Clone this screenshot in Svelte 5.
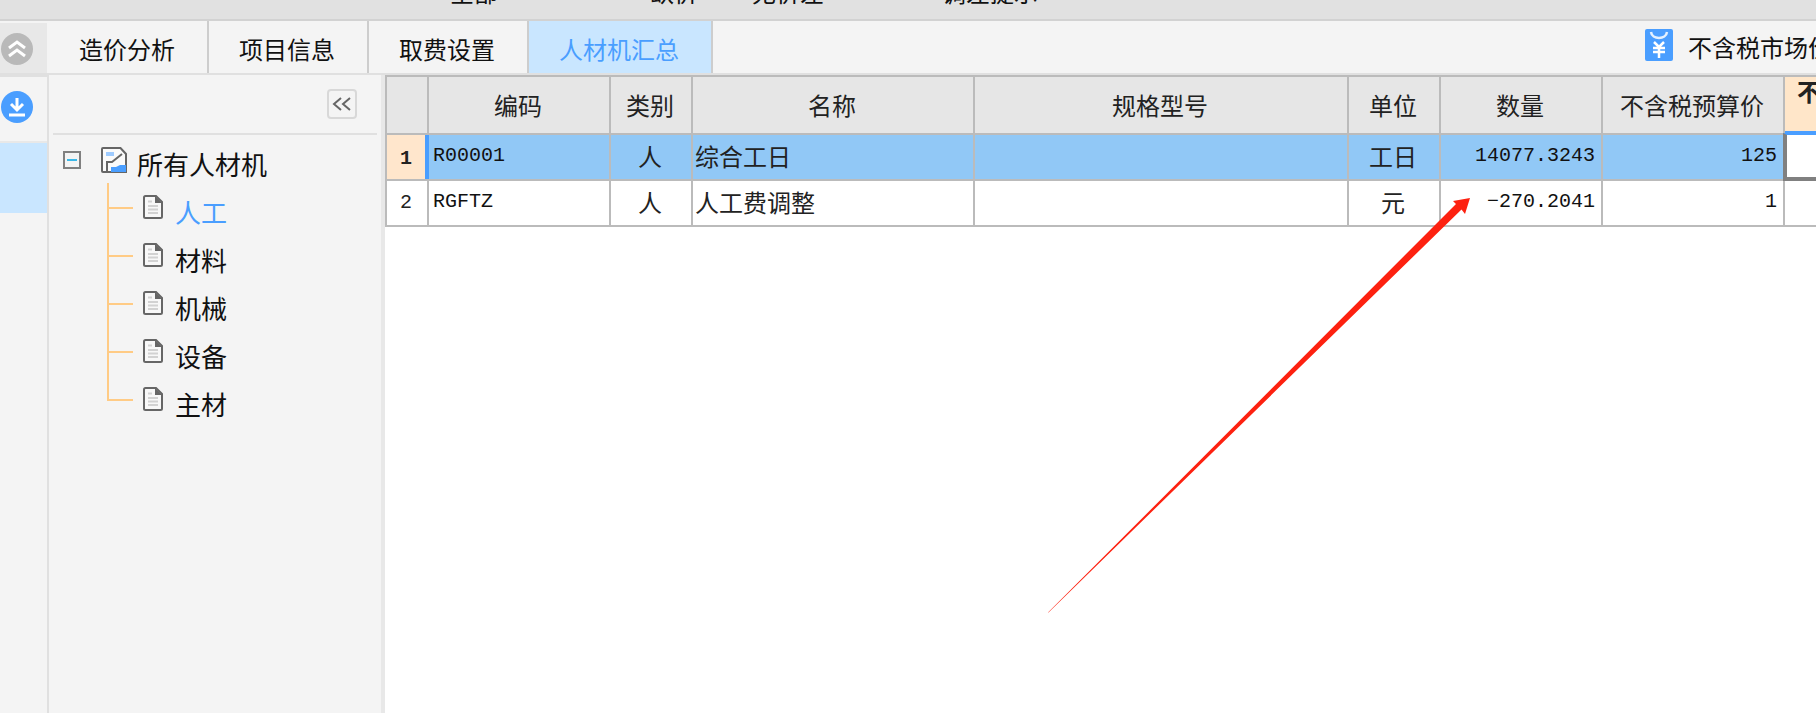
<script>
  const topItems = ['全部', '缺价', '无价差', '调差提示'];
  const tabs = ['造价分析', '项目信息', '取费设置', '人材机汇总'];
  const treeItems = ['人工', '材料', '机械', '设备', '主材'];
  const columns = ['', '编码', '类别', '名称', '规格型号', '单位', '数量', '不含税预算价'];
  const rows = [
    { no: '1', code: 'R00001', kind: '人', name: '综合工日', unit: '工日', qty: '14077.3243', price: '125' },
    { no: '2', code: 'RGFTZ', kind: '人', name: '人工费调整', unit: '元', qty: '−270.2041', price: '1' }
  ];
</script>

{#snippet docIcon()}
  <svg class="doc" viewBox="0 0 20 24" aria-hidden="true">
    <path d="M2.500 1h10.500l6 6v14.500a1.500 1.500 0 0 1-1.500 1.500h-15a1.500 1.500 0 0 1-1.500-1.500v-19a1.500 1.500 0 0 1 1.500-1.500z" fill="#f8f8f8" stroke="#666" stroke-width="2" />
    <path d="M12 1l7 7h-7z" fill="#666" />
    <path d="M5 6.500h4M5 11h10M5 14.500h10M5 18h10" stroke="#d2d2d2" stroke-width="2" />
  </svg>
{/snippet}

<div class="app">
  <div class="topbar">
    {#each topItems as item}
      <span>{item}</span>
    {/each}
  </div>

  <div class="tabs">
    <div class="collapse-cell">
      <svg class="circle" viewBox="0 0 32 32" aria-hidden="true">
        <circle cx="16" cy="16" r="16" fill="#b9b9b9" />
        <path d="M8 15l8-6 8 6M8 23l8-6 8 6" fill="none" stroke="#fff" stroke-width="3" />
      </svg>
    </div>
    {#each tabs as tab, i}
      <div class="tab" class:active={i === 3}>{tab}</div>
    {/each}
    <div class="price-switch">
      <svg class="yen" viewBox="0 0 28 32" aria-hidden="true">
        <rect width="28" height="32" rx="2" fill="#4a9eff" />
        <path d="M6 3c1 8 15 8 16 0" fill="none" stroke="#fff" stroke-width="2.500" opacity=".85" />
        <path d="M9 13l5 5 5-5M8 19h12M8 23h12M14 18v11" fill="none" stroke="#fff" stroke-width="2.500" />
      </svg>
      <span>不含税市场价</span>
    </div>
  </div>

  <div class="main">
    <aside class="rail">
      <svg class="circle" viewBox="0 0 32 32" aria-hidden="true">
        <circle cx="16" cy="16" r="16" fill="#4a9eff" />
        <path d="M16 7v11M10 13l6 6 6-6M8 24h16" fill="none" stroke="#fff" stroke-width="3" />
      </svg>
      <div class="rail-selected"></div>
    </aside>

    <nav class="tree">
      <div class="tree-tools">
        <div class="fold-btn">
          <svg viewBox="0 0 26 26" aria-hidden="true">
            <path d="M12 7l-7 6 7 6M21 7l-7 6 7 6" fill="none" stroke="#666" stroke-width="2" />
          </svg>
        </div>
      </div>
      <div class="root">
        <span class="minus"></span>
        <svg class="root-icon" viewBox="0 0 26 26" aria-hidden="true">
          <path d="M2 1h17.500l5.500 6v18h-23a1 1 0 0 1-1-1v-22a1 1 0 0 1 1-1z" fill="#fafafa" stroke="#666" stroke-width="2" />
          <path d="M5 5h8v4h-8z" fill="#9ecbff" />
          <path d="M6 25v-10h5l10-8" fill="none" stroke="#666" stroke-width="2" />
          <path d="M10 25v-5h5l4-2h6v7z" fill="#4a9eff" />
        </svg>
        <span class="root-label">所有人材机</span>
      </div>
      <ul>
        {#each treeItems as item, i}
          <li class:active={i === 0}>
            {@render docIcon()}
            <span>{item}</span>
          </li>
        {/each}
      </ul>
    </nav>

    <section class="sheet">
      <div class="grid">
        {#each columns as col}
          <div class="head">{col}</div>
        {/each}
        <div class="head head-cur">不含税市场价</div>

        {#each rows as row, i}
          <div class="no" class:on={i === 0}>{row.no}</div>
          <div class="cell mono code" class:sel={i === 0}>{row.code}</div>
          <div class="cell center" class:sel={i === 0}>{row.kind}</div>
          <div class="cell" class:sel={i === 0}>{row.name}</div>
          <div class="cell" class:sel={i === 0}></div>
          <div class="cell center" class:sel={i === 0}>{row.unit}</div>
          <div class="cell mono right" class:sel={i === 0}>{row.qty}</div>
          <div class="cell mono right" class:sel={i === 0}>{row.price}</div>
          <div class="cell" class:cur={i === 0}></div>
        {/each}
      </div>
    </section>
  </div>

  <svg class="arrow" viewBox="0 0 1816 713" aria-hidden="true">
    <path d="M1048 612.500L1456 204L1453 201L1470 198L1465 214L1461.500 209.500L1048.500 612.500z" fill="#fd2110" />
  </svg>
</div>

<style>
  :global(body) {
    background: #fff;
  }
  .app {
    position: relative;
    width: 1816px;
    height: 713px;
    overflow: hidden;
    display: flex;
    flex-direction: column;
    font-family: 'Noto Sans CJK SC', 'Liberation Sans', sans-serif;
    font-size: 24px;
    line-height: 24px;
    color: #111;
    background: #fff;
  }
  .topbar {
    box-sizing: border-box;
    flex: none;
    height: 21px;
    display: flex;
    padding-left: 450px;
    overflow: hidden;
    background: #e1e1e1;
    border-bottom: 2px solid #d2d2d2;
  }
  .topbar span {
    margin-top: -20px;
    height: 24px;
  }
  .topbar span:nth-child(2) {
    margin-left: 152px;
  }
  .topbar span:nth-child(3) {
    margin-left: 54px;
  }
  .topbar span:nth-child(4) {
    margin-left: 118px;
  }
  .tabs {
    box-sizing: border-box;
    flex: none;
    height: 54px;
    display: flex;
    background: #f4f4f4;
    border-bottom: 2px solid #e0e0e0;
  }
  .collapse-cell {
    box-sizing: border-box;
    width: 49px;
    padding: 10px 0 0 1px;
    margin-top: 2px;
    background: #e8e8e8;
    border-right: 2px solid #f4f4f4;
  }
  .circle {
    display: block;
    width: 32px;
    height: 32px;
  }
  .tab {
    box-sizing: border-box;
    width: 160px;
    padding: 16px 2px 0 0;
    text-align: center;
    border-right: 2px solid #cdcdcd;
  }
  .tab.active {
    width: 184px;
    color: #4a9eff;
    background: #c9e6ff;
  }
  .price-switch {
    margin-left: auto;
    width: 171px;
    display: flex;
    align-items: center;
    gap: 15px;
    overflow: hidden;
    white-space: nowrap;
  }
  .yen {
    flex: none;
    width: 28px;
    height: 32px;
    margin-top: -4px;
  }
  .main {
    flex: 1;
    min-height: 0;
    display: flex;
  }
  .rail {
    box-sizing: border-box;
    flex: none;
    width: 49px;
    padding: 14px 0 0 1px;
    background: #f4f4f4;
    border-top: 2px solid #e0e0e0;
    border-right: 2px solid #e0e0e0;
  }
  .rail-selected {
    height: 70px;
    margin: 18px 0 0 -1px;
    background: #c9e6ff;
    border-top: 2px solid #e8e8e8;
  }
  .tree {
    box-sizing: border-box;
    flex: none;
    width: 336px;
    background: #f4f4f4;
    border-right: 4px solid #e8e8e8;
  }
  .tree-tools {
    box-sizing: border-box;
    height: 60px;
    margin: 0 4px;
    padding: 14px 20px 0 0;
    display: flex;
    justify-content: flex-end;
    border-bottom: 2px solid #e0e0e0;
  }
  .fold-btn {
    box-sizing: border-box;
    width: 30px;
    height: 30px;
    border: 2px solid #d8d8d8;
    border-radius: 4px;
  }
  .fold-btn svg {
    display: block;
    width: 26px;
    height: 26px;
  }
  .root {
    box-sizing: border-box;
    height: 48px;
    padding: 12px 0 0 14px;
    display: flex;
    align-items: flex-start;
  }
  .minus {
    box-sizing: border-box;
    flex: none;
    width: 18px;
    height: 18px;
    margin: 4px 20px 0 0;
    border: 2px solid #808080;
    display: flex;
    align-items: center;
    justify-content: center;
  }
  .minus::before {
    content: '';
    width: 10px;
    height: 2px;
    background: #3bb8e8;
  }
  .root-icon {
    flex: none;
    width: 26px;
    height: 26px;
  }
  .root-label {
    margin: 4px 0 0 10px;
    font-size: 26px;
    line-height: 26px;
  }
  ul {
    list-style: none;
    margin: 0 0 0 58px;
    padding: 0;
    width: 200px;
    border-left: 2px solid #ffcb85;
  }
  li {
    height: 48px;
    display: flex;
    align-items: flex-start;
    font-size: 26px;
    line-height: 36px;
  }
  li:last-child {
    height: 26px;
  }
  li::before {
    content: '';
    flex: none;
    width: 24px;
    height: 2px;
    margin-top: 24px;
    background: #ffcb85;
  }
  li.active span {
    color: #4a9eff;
  }
  .doc {
    flex: none;
    width: 20px;
    height: 24px;
    margin: 12px 12px 0 10px;
  }
  li span {
    margin-top: 11px;
    flex: none;
  }
  .sheet {
    flex: 1;
    min-width: 0;
    overflow: hidden;
    background: #fff;
  }
  .grid {
    display: grid;
    grid-template-columns: 40px 180px 80px 280px 372px 90px 160px 180px 60px;
    grid-template-rows: 56px 44px 44px;
    gap: 2px;
    width: max-content;
    padding: 2px 0 2px 2px;
    background: #bbb;
    color: #222;
  }
  .head {
    box-sizing: border-box;
    display: flex;
    align-items: center;
    justify-content: center;
    padding-right: 2px;
    background: #e6e6e6;
  }
  .head-cur {
    display: block;
    padding: 2px 0 0 12px;
    overflow: hidden;
    white-space: nowrap;
    font-weight: 700;
    background: #ffe6c9;
    border-bottom: 2px solid #4a9eff;
  }
  .no {
    box-sizing: border-box;
    display: flex;
    align-items: center;
    justify-content: center;
    padding-right: 2px;
    font-family: 'Liberation Mono', monospace;
    font-size: 20px;
    background: #fff;
  }
  .no.on {
    padding-top: 4px;
    font-weight: 700;
    background: #ffe6cc;
  }
  .cell {
    box-sizing: border-box;
    display: flex;
    align-items: center;
    padding: 0 4px 3px 2px;
    min-width: 0;
    background: #fff;
  }
  .cell.sel {
    background: #91c8f6;
  }
  .cell.code.sel {
    margin-left: -4px;
    border-left: 4px solid #4a9eff;
  }
  .cell.cur {
    margin: -2px 0 -2px -2px;
    background: #fff;
    border-top: 2px solid #4a9eff;
    border-left: 4px solid #808080;
    border-bottom: 4px solid #808080;
  }
  .center {
    justify-content: center;
  }
  .right {
    justify-content: flex-end;
    padding-right: 6px;
  }
  .mono {
    padding-left: 4px;
    padding-bottom: 2px;
    font-family: 'Liberation Mono', 'Noto Sans CJK SC', monospace;
    font-size: 20px;
    color: #111;
  }
  .arrow {
    position: absolute;
    inset: 0;
    width: 1816px;
    height: 713px;
    pointer-events: none;
  }
</style>
